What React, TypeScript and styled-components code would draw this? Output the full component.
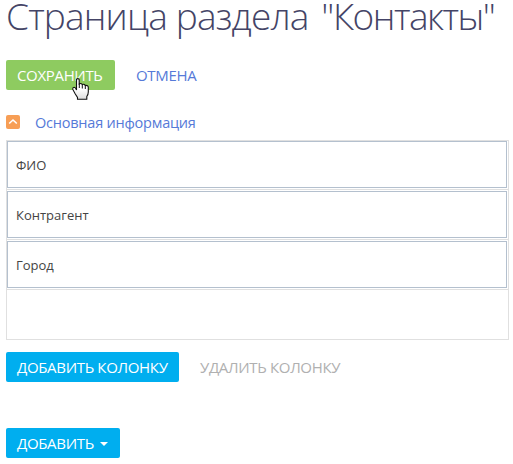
import React from 'react';
import styled, { createGlobalStyle } from 'styled-components';

const GlobalStyle = createGlobalStyle`
  * { box-sizing: border-box; }
  body {
    margin: 0;
    background: #fff;
    font-family: 'Open Sans', 'Noto Sans', sans-serif;
    overflow: hidden;
  }
`;

const Page = styled.main`
  display: flex;
  flex-direction: column;
  width: 513px;
  height: 464px;
  padding: 0 4px 0 6px;
`;

const Title = styled.h1`
  margin: 0;
  height: 60px;
  font-size: 37px;
  line-height: 32px;
  font-weight: 300;
  letter-spacing: -0.83px;
  color: #444466;
  white-space: nowrap;
`;

const SectionTitle = styled.span`
  margin-left: 4px;
  letter-spacing: -1.5px;
`;

const Toolbar = styled.div<{ $gap?: number }>`
  display: flex;
  align-items: center;
  height: 30px;
  gap: 10px;
  margin-bottom: ${({ $gap = 0 }) => $gap}px;
`;

type Variant = 'save' | 'primary' | 'link' | 'disabled';

const palette: Record<Variant, { bg: string; fg: string }> = {
  save: { bg: '#8ecb60', fg: '#fff' },
  primary: { bg: '#00aeef', fg: '#fff' },
  link: { bg: 'transparent', fg: '#567ad8' },
  disabled: { bg: 'transparent', fg: '#b0b0b0' },
};

const Button = styled.button<{ $variant: Variant; $width: number }>`
  position: relative;
  display: flex;
  align-items: center;
  gap: 6px;
  width: ${({ $width }) => $width}px;
  height: 30px;
  padding: 1px 0 0 11px;
  border: 0;
  border-radius: 2px;
  background: ${({ $variant }) => palette[$variant].bg};
  color: ${({ $variant }) => palette[$variant].fg};
  font-family: inherit;
  font-size: 15px;
  line-height: 29px;
  letter-spacing: -0.33px;
  white-space: nowrap;
`;

const Pointer = styled.svg`
  position: absolute;
  left: 66px;
  top: 18px;
  z-index: 1;
`;

const SectionHeader = styled.div`
  display: flex;
  align-items: center;
  height: 24px;
  margin-bottom: 6px;
  gap: 15px;
`;

const Toggle = styled.span`
  display: flex;
  width: 14px;
  height: 14px;
  border-radius: 2px;
  background: #f79e55;
`;

const SectionName = styled.span`
  padding-top: 1px;
  color: #567ad8;
  font-size: 14.5px;
  line-height: 24px;
  letter-spacing: -0.22px;
`;

const Grid = styled.div`
  width: 503px;
  height: 200px;
  margin-bottom: 12px;
  border: 1px solid #e0e0e0;
`;

const Row = styled.div`
  height: 49px;
  margin-bottom: 1px;
  padding-right: 1px;
  border-bottom: 1px solid #e0e0e0;
`;

const Field = styled.div`
  height: 47px;
  padding-left: 8px;
  border: 1px solid #b4c0ce;
  color: #444;
  font-size: 13px;
  line-height: 46px;
`;

export default function App() {
  return (
    <>
      <GlobalStyle />
      <Page>
        <Title>
          Страница раздела <SectionTitle>"Контакты"</SectionTitle>
        </Title>
        <Toolbar $gap={20}>
          <Button $variant="save" $width={109}>
            <span>СОХРАНИТЬ</span>
            <Pointer width="17" height="22" viewBox="0 0 17 22">
              <defs>
                <linearGradient id="hand" x1="0" y1="0" x2="0" y2="1">
                  <stop offset="0.5" stopColor="#fff" />
                  <stop offset="1" stopColor="#ddd" />
                </linearGradient>
              </defs>
              <path
                d="M4.5 12 V1.8 Q4.5 .6 5.8 .6 Q7.2 .6 7.2 1.8 V6 Q9.2 4.8 10.2 6.5 Q12.2 5.7 13.2 7.4 Q16.3 7 16.3 9.6 V14 Q16.3 16.5 14.8 18.5 V21.3 H5.5 V19.5 L3 15.5 L.7 11.2 Q.6 9.4 2.1 9.3 Q3.4 9.3 4.5 12 Z"
                fill="url(#hand)"
                stroke="#111"
                strokeWidth="1.1"
              />
              <path d="M7.3 5.5V10M10.3 6.5V10.5M13.3 7.5V11" stroke="#111" fill="none" />
            </Pointer>
          </Button>
          <Button $variant="link" $width={90}>ОТМЕНА</Button>
        </Toolbar>
        <SectionHeader>
          <Toggle>
            <svg width="14" height="14" viewBox="0 0 14 14">
              <path d="M3.2 8.5 L7 5 L10.8 8.5" fill="none" stroke="#fff" strokeWidth="1.6" />
            </svg>
          </Toggle>
          <SectionName>Основная информация</SectionName>
        </SectionHeader>
        <Grid>
          {['ФИО', 'Контрагент', 'Город'].map((name) => (
            <Row key={name}>
              <Field>{name}</Field>
            </Row>
          ))}
        </Grid>
        <Toolbar $gap={46}>
          <Button $variant="primary" $width={173}>ДОБАВИТЬ КОЛОНКУ</Button>
          <Button $variant="disabled" $width={165}>УДАЛИТЬ КОЛОНКУ</Button>
        </Toolbar>
        <Toolbar>
          <Button $variant="primary" $width={114}>
            <span>ДОБАВИТЬ</span>
            <svg width="8" height="4" viewBox="0 0 8 4">
              <path d="M0 0H8L4 4Z" fill="#fff" />
            </svg>
          </Button>
        </Toolbar>
      </Page>
    </>
  );
}
